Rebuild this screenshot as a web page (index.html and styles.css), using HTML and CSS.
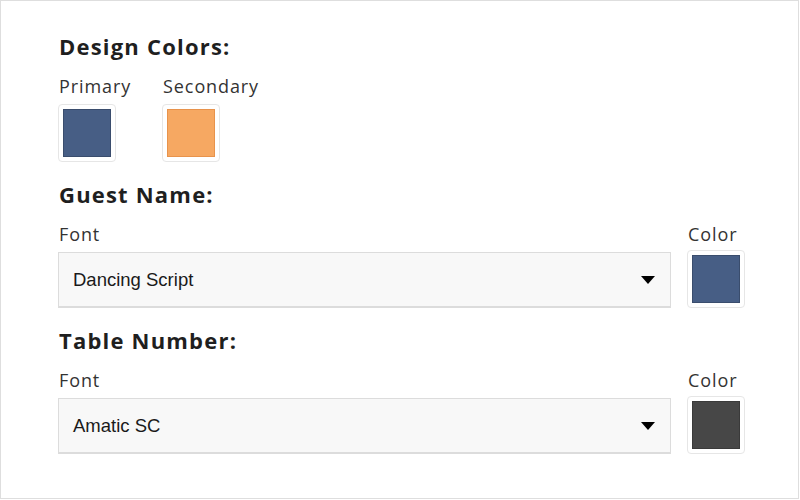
FILE: index.html
```html
<!DOCTYPE html>
<html>
<head>
<meta charset="utf-8">
<link rel="stylesheet" href="styles.css">
</head>
<body>
<div class="frame">
  <h2 class="heading first">Design Colors:</h2>
  <div class="swatch-row">
    <div class="swatch-col">
      <div class="label">Primary</div>
      <div class="swatch"><div class="chip chip-blue"></div></div>
    </div>
    <div class="swatch-col">
      <div class="label">Secondary</div>
      <div class="swatch"><div class="chip chip-orange"></div></div>
    </div>
  </div>

  <h2 class="heading">Guest Name:</h2>
  <div class="field-row">
    <div class="field">
      <div class="label">Font</div>
      <div class="select"><span class="select-text">Dancing Script</span><span class="caret"></span></div>
    </div>
    <div class="color-col">
      <div class="label">Color</div>
      <div class="swatch"><div class="chip chip-blue"></div></div>
    </div>
  </div>

  <h2 class="heading">Table Number:</h2>
  <div class="field-row">
    <div class="field">
      <div class="label">Font</div>
      <div class="select"><span class="select-text">Amatic SC</span><span class="caret"></span></div>
    </div>
    <div class="color-col">
      <div class="label">Color</div>
      <div class="swatch"><div class="chip chip-dark"></div></div>
    </div>
  </div>
</div>
</body>
</html>
```
FILE: styles.css
```css
html, body {
  margin: 0;
  padding: 0;
  background: #ffffff;
}
.frame {
  width: 799px;
  height: 499px;
  box-sizing: border-box;
  border: 1px solid #dedede;
  padding: 33px 53px 0 57px;
  font-family: "Open Sans", "Noto Sans", sans-serif;
  color: #222222;
}
.heading {
  margin: 20px 0 0 0;
  font-size: 22px;
  line-height: 24px;
  font-weight: 700;
  color: #1f1f1f;
  letter-spacing: 1.2px;
  padding-left: 1px;
}
.heading.first {
  margin-top: 0;
}
.label {
  font-size: 18px;
  line-height: 20px;
  color: #333333;
  letter-spacing: 0.9px;
  padding-left: 1px;
}
.swatch-row {
  display: flex;
  gap: 31px;
  margin-top: 18px;
}
.swatch-col {
  display: flex;
  flex-direction: column;
  gap: 8px;
}
.swatch {
  width: 58px;
  height: 58px;
  box-sizing: border-box;
  border: 1px solid #e6e6e6;
  border-radius: 4px;
  padding: 4px;
  background: #ffffff;
}
.chip {
  width: 100%;
  height: 100%;
  box-sizing: border-box;
  border: 1px solid rgba(0, 0, 0, 0.18);
}
.chip-blue { background: #475e85; }
.chip-orange { background: #f6a862; border-color: #e8934c; }
.chip-dark { background: #474747; }
.field-row {
  display: flex;
  align-items: flex-end;
  gap: 16px;
  margin-top: 18px;
}
.field {
  flex: 1;
  display: flex;
  flex-direction: column;
  gap: 8px;
}
.color-col {
  width: 58px;
  display: flex;
  flex-direction: column;
  gap: 6px;
}
.select {
  height: 56px;
  box-sizing: border-box;
  border: 1px solid #dcdcdc;
  border-bottom-width: 2px;
  background: #f8f8f8;
  display: flex;
  align-items: center;
  justify-content: space-between;
  padding: 0 15px 0 14px;
}
.select-text {
  font-family: "Liberation Sans", Arial, sans-serif;
  font-size: 18.5px;
  color: #1a1a1a;
}
.caret {
  width: 0;
  height: 0;
  border-left: 7px solid transparent;
  border-right: 7px solid transparent;
  border-top: 8px solid #000000;
}
```
